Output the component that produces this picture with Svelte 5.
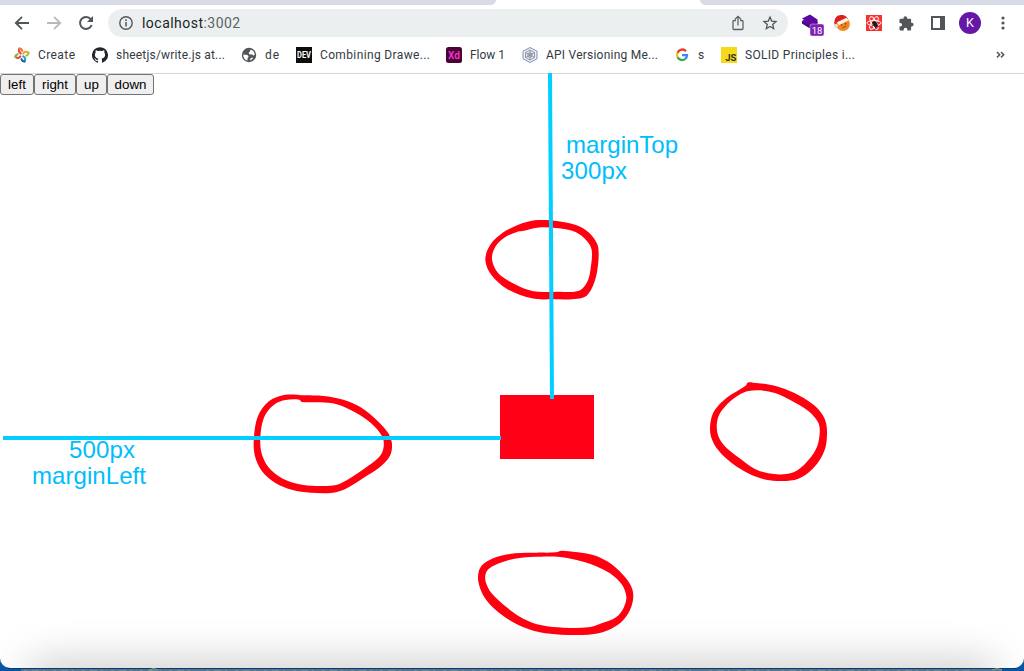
<script>
  const bookmarks = [
    { icon: 'create', label: 'Create', width: 78, text: 37 },
    { icon: 'github', label: 'sheetjs/write.js at...', width: 149, text: 109 },
    { icon: 'globe', label: 'de', width: 55, text: 14 },
    { icon: 'dev', label: 'Combining Drawe...', width: 150, text: 110 },
    { icon: 'xd', label: 'Flow 1', width: 76, text: 35 },
    { icon: 'hex', label: 'API Versioning Me...', width: 152, text: 112 },
    { icon: 'google', label: 's', width: 47, text: 6 },
    { icon: 'js', label: 'SOLID Principles i...', width: 150, text: 110 }
  ];
  const moves = [
    { label: 'left', width: 34 },
    { label: 'right', width: 42 },
    { label: 'up', width: 31 },
    { label: 'down', width: 47 }
  ];

  // Pen strokes: outer and inner edges, in thirds of a pixel from (x, y).
  const rings = [
    {
      x: 470, y: 200,
      outer: '143,75 100,97 62,133 46,177 62,222 110,266 185,295 250,298 313,297 350,287 372,250 382,210 386,165 382,133 358,99 318,75 240,61 194,61 170,66',
      inner: '143,95 162,92 202,83 258,84 315,95 350,122 365,150 362,205 352,245 327,272 265,275 190,274 135,253 85,220 66,178 76,140 105,112'
    },
    {
      x: 240, y: 380,
      outer: '132,45 194,46 250,48 310,59 362,82 412,122 445,160 456,192 450,227 420,261 370,294 316,327 279,338 213,338 155,329 105,308 66,274 44,225 42,169 54,108 85,65',
      inner: '178,59 137,60 105,72 76,104 63,150 63,212 85,261 130,297 190,315 240,318 285,316 320,301 387,256 420,228 431,200 427,170 395,131 345,97 290,73 240,67 186,66'
    },
    {
      x: 690, y: 370,
      outer: '167,47 173,38 189,38 239,44 285,57 341,84 385,118 408,158 409,220 395,260 365,299 325,326 278,333 228,329 180,313 125,279 85,241 63,200 61,160 73,122 110,83',
      inner: '176,63 148,74 112,102 85,140 82,188 103,227 151,266 195,297 235,310 280,313 320,302 358,267 381,230 389,190 385,158 355,123 302,91 255,69 212,61'
    },
    {
      x: 460, y: 540,
      outer: '288,37 305,32 325,34 370,39 409,48 455,73 498,115 517,148 519,180 505,220 476,253 430,276 385,284 303,284 240,277 175,255 115,217 75,175 56,130 56,95 70,72 110,51 165,40 230,38',
      inner: '293,50 240,50 184,53 140,62 95,80 78,98 77,125 95,160 140,202 190,236 245,256 310,263 385,262 425,250 468,232 491,203 499,170 485,133 450,100 405,77 350,60'
    }
  ];

  function curve(list) {
    const p = list.split(' ').map((pair) => pair.split(',').map(Number));
    const at = (i) => p[(i + p.length) % p.length];
    let d = `M${p[0]}`;
    for (let i = 0; i < p.length; i++) {
      const [a, b, c, e] = [at(i - 1), at(i), at(i + 1), at(i + 2)];
      // Handles are limited by the chord length so uneven spacing never overshoots.
      const len = (m, n) => Math.hypot(m[0] - n[0], m[1] - n[1]);
      const bc = len(b, c);
      const s = bc / (len(a, b) + bc) / 3;
      const t = bc / (len(c, e) + bc) / 3;
      d += `C${b[0] + (c[0] - a[0]) * s} ${b[1] + (c[1] - a[1]) * s} ${c[0] - (e[0] - b[0]) * t} ${c[1] - (e[1] - b[1]) * t} ${c[0]} ${c[1]}`;
    }
    return d + 'Z';
  }
</script>

<div class="desktop">
  <svg class="behind" width="1024" height="7" viewBox="0 0 1024 7">
    <path d="M0 0h1024v7H0z" fill="#0755a5" />
    <path d="M21 4.5h981V7H21z" fill="#52748f" />
    <path d="M8 4h1008v1H8z" fill="#073e71" />
    <path d="M24 6.5h174m8 0h198m10 0h130m10 0h145m10 0h62m10 0h190" stroke="#74898f" stroke-dasharray="3 5 7 4 2 8" />
    <path d="M149 6q5-3 9 0M992 6q5-3 10 0" fill="none" stroke="#82aa89" />
  </svg>

  <main class="window">
    <div class="tabs"><i class="tab-left"></i><i class="tab-right"></i></div>

    <header class="toolbar">
      <svg class="nav" width="100" height="28" viewBox="0 0 100 28" fill="none" stroke-width="2">
        <path d="M29 14H16.2M22 7.8 15.8 14l6.2 6.2" stroke="#51565b" stroke-width="1.8" />
        <path d="M47 14h12.8M54 7.8l6.2 6.2-6.2 6.2" stroke="#b7babc" stroke-width="1.8" />
        <path d="M90.8 10.2A6 6 0 1 0 91.7 16" stroke="#51565b" />
        <path d="M93 7v6h-6z" fill="#51565b" />
      </svg>
      <div class="address">
        <svg width="16" height="16" viewBox="0 0 16 16"><circle cx="8" cy="8" r="6.2" fill="none" stroke="#51565b" stroke-width="1.4" /><path d="M8 7v4.5M8 4.3v1.6" stroke="#51565b" stroke-width="1.5" /></svg>
        <span class="url">localhost<em>:3002</em></span>
        <svg class="share" width="16" height="18" viewBox="0 0 16 18" fill="none" stroke="#5c6165" stroke-width="1.3"><path d="M6 6.5H4a1 1 0 0 0-1 1v7a1 1 0 0 0 1 1h8a1 1 0 0 0 1-1v-7a1 1 0 0 0-1-1h-2M8 11.5V2.5M5 5.3l3-3 3 3" /></svg>
        <svg width="16" height="16" viewBox="0 0 16 16" fill="none" stroke="#51565b" stroke-width="1.3"><path d="m8 2.1 1.7 4 4.3.4-3.3 2.9 1 4.3L8 11.5l-3.7 2.2 1-4.3L2 6.5l4.3-.4z" /></svg>
      </div>
      <div class="extensions">
        <svg width="24" height="24" viewBox="0 0 24 24"><path d="m10 3.5 7.5 5v4l-7.5 4-8-4.5V10l2-1.2L2 7.5z" fill="#5e08a2" /><path d="m2 10.5 8 5 7.5-5v2l-7.5 5-8-5z" fill="#430779" /><rect x="10" y="13" width="14" height="12" rx="2" fill="#7e20b5" stroke="#fff" stroke-width=".4" /><text x="17" y="22.7" text-anchor="middle" font-size="9.5" fill="white">18</text></svg>
        <svg width="18" height="18" viewBox="0 0 18 18"><circle cx="10" cy="10" r="6.9" fill="#f28721" /><path d="M1.5 11C.6 4 4 1 8 1c4 0 7 2 7 5L5 8z" fill="#dc211d" /><path d="m4 8.3 9.5-4.5 2.3 2.5-10 5z" fill="#fff4e7" /><circle cx="3" cy="12" r="2" fill="#e3dddd" /><circle cx="8.5" cy="11" r=".8" fill="#7c361a" /><circle cx="12.5" cy="9.7" r=".8" fill="#7c361a" /><path d="M9.5 13.6q3 0 3.6-2" fill="none" stroke="#a34b15" /></svg>
        <svg width="16" height="16" viewBox="0 0 16 16"><path d="M0 0h16v16H0z" fill="#f53331" /><g fill="none" stroke="#fff" stroke-width=".9"><ellipse cx="8" cy="8" rx="7" ry="2.6" /><ellipse cx="8" cy="8" rx="7" ry="2.6" transform="rotate(60 8 8)" /><ellipse cx="8" cy="8" rx="7" ry="2.6" transform="rotate(120 8 8)" /></g><ellipse cx="9" cy="9.3" rx="2.2" ry="3.2" fill="#28171a" transform="rotate(-30 9 9)" /><path d="m6 7 7 5M6 11l6-4M8 6l2 8" stroke="#28171a" stroke-width=".8" /></svg>
        <svg width="16" height="16" viewBox="0 0 16 16"><path fill="#51565b" d="M2.5 3.8h3V3a1.8 1.8 0 0 1 3.6 0v.8h3a1 1 0 0 1 1 1v3h.7a1.8 1.8 0 0 1 0 3.6h-.7v3a1 1 0 0 1-1 1H9.3v-.9a1.8 1.8 0 0 0-3.6 0v.9H2.5a1 1 0 0 1-1-1v-2.8h.8a1.8 1.8 0 0 0 0-3.6h-.8V4.8a1 1 0 0 1 1-1z" /></svg>
        <svg width="14" height="14" viewBox="0 0 14 14"><path d="M1 1h12v12H1z" fill="#fff" stroke="#51565b" stroke-width="2" /><path d="M9 1h4v12H9z" fill="#51565b" /></svg>
        <div class="avatar">K</div>
        <svg width="4" height="14" viewBox="0 0 4 14" fill="#51565b"><circle cx="2" cy="2" r="1.6" /><circle cx="2" cy="7" r="1.6" /><circle cx="2" cy="12" r="1.6" /></svg>
      </div>
    </header>

    <nav class="bookmarks">
      {#each bookmarks as item}
        <div class="bookmark" style:width="{item.width}px">
          <svg width="16" height="16" viewBox="0 0 16 16">
            {#if item.icon === 'create'}
              <g fill="none" stroke-width="2.1" stroke-linecap="round"><path d="M6.8 6.5Q3.8 4.6 5.4 1.6" stroke="#ef4a3c" /><path d="M5.4 1.6Q7.5 1.5 8.3 3.8" stroke="#f07a35" /><path d="M9.3 6.6Q11 3.4 14.4 5.7" stroke="#f5a02c" /><path d="M14.4 5.7q.4 2-2.1 3" stroke="#9cc83d" /><path d="M9.3 9.4q3.1 1.7 1.2 5" stroke="#2b9ed0" /><path d="M10.5 14.4q-2.3.1-3-2.2" stroke="#1766ac" /><path d="M6.5 9.3Q4.6 12.3 1.5 10" stroke="#ed4148" /><path d="M1.5 10q-.2-2 2.1-2.8" stroke="#78bd43" /></g>
            {:else if item.icon === 'github'}
              <path fill="#20262b" d="M8 .2a8 8 0 0 0-2.5 15.6c.4.1.5-.2.5-.4v-1.6c-2.2.5-2.7-.9-2.7-.9-.4-1-.9-1.2-.9-1.2-.7-.5.1-.5.1-.5.8.1 1.2.8 1.2.8.7 1.2 1.9.9 2.3.7.1-.5.3-.9.5-1.1-1.8-.2-3.6-.9-3.6-4 0-.9.3-1.6.8-2.2-.1-.2-.4-1 .1-2.1 0 0 .7-.2 2.2.8a7.6 7.6 0 0 1 4 0c1.5-1 2.2-.8 2.2-.8.4 1.1.1 1.9.1 2.1.5.6.8 1.3.8 2.2 0 3.1-1.9 3.8-3.7 4 .3.3.6.8.6 1.5v2.3c0 .2.1.5.5.4A8 8 0 0 0 8 .2z" />
            {:else if item.icon === 'globe'}
              <circle cx="8" cy="8" r="7.2" fill="#51565b" /><path d="M2.3 7.6 6.5 8l1.2 1.6L6.5 11v2.6C3.5 12.9 2 10.5 2.3 7.6zM9.5 2.4c2.4.5 4.2 2.7 4.2 5.1l-.9 1.2-1.5-1.3H8.7L7.5 5.8 9 4.6z" fill="#fff" /><path d="m9 12 1.8-1.5 1.5.6L9.5 13.6z" fill="#fff" />
            {:else if item.icon === 'dev'}
              <path d="M0 0h16v16H0z" fill="#0d0d0d" /><text x="1" y="11.4" font-size="9" font-weight="700" fill="#fff" textLength="14" lengthAdjust="spacingAndGlyphs">DEV</text>
            {:else if item.icon === 'xd'}
              <rect width="16" height="16" rx="2.5" fill="#480433" /><text x="2" y="11.5" font-size="10" font-weight="600" fill="#ff32d0" textLength="12">Xd</text>
            {:else if item.icon === 'hex'}
              <path d="m8 .5 7 3.7v7.6l-7 3.7-7-3.7V4.2z" fill="#edf0f4" stroke="#8189c6" /><g fill="none" stroke="#77848d" stroke-width=".8"><path d="m8 3 4.5 2.5v5L8 13l-4.5-2.5v-5zm0 0v10M3.5 5.5l9 5m0-5-9 5" /><circle cx="8" cy="8" r="2.3" /></g>
            {:else if item.icon === 'google'}
              <g fill="none" stroke-width="2.3"><path d="M12 4.2A5 5 0 0 0 3.6 5.8" stroke="#ea3829" /><path d="M3.6 5.8a5 5 0 0 0 0 4.5" stroke="#fbbc05" /><path d="M3.6 10.3a5 5 0 0 0 7.7 1.6" stroke="#34a853" /><path d="M8 8.2h5q0 2.3-1.7 3.7" stroke="#4285f4" /></g>
            {:else}
              <path d="M0 0h16v16H0z" fill="#f4da19" /><text x="4.3" y="14.3" font-size="9.5" font-weight="700" fill="#303020" textLength="11">JS</text>
            {/if}
          </svg>
          <svg class="label" width={item.text + 2} height="18"><text x="0" y="13" textLength={item.text}>{item.label}</text></svg>
        </div>
      {/each}
      <svg class="more" width="9" height="9" viewBox="0 0 9 9" fill="none" stroke="#51565b" stroke-width="1.5"><path d="m1 2 2.7 2.7L1 7.4M5 2l2.7 2.7L5 7.4" /></svg>
    </nav>

    <section class="page">
      <div class="buttons">
        {#each moves as move}
          <button style:width="{move.width}px">{move.label}</button>
        {/each}
      </div>
      <svg class="canvas" width="1024" height="598" viewBox="0 73 1024 598">
        <path d="M500 395h94v64h-94z" fill="#ff0016" />
        <g fill="#ff0010" fill-rule="evenodd">
          {#each rings as ring}
            <path transform="translate({ring.x} {ring.y}) scale(.33333)" d={curve(ring.outer) + curve(ring.inner)} />
          {/each}
        </g>
        <g stroke="#00cfff" stroke-width="4" fill="none"><path d="M550 73 552 399" /><path d="M3 438h498" /></g>
        <g class="notes"><text x="566" y="153" textLength="112">marginTop</text><text x="561" y="179" textLength="66">300px</text><text x="69" y="458" textLength="66">500px</text><text x="32" y="484" textLength="114">marginLeft</text></g>
      </svg>
    </section>
  </main>
</div>

<style>
  :global(body) { margin: 0; overflow: hidden; }
  .desktop { position: relative; width: 1024px; height: 671px; overflow: hidden; background: #0755a5; font-family: Roboto, sans-serif; }
  svg { display: block; flex-shrink: 0; }
  .behind { position: absolute; left: 0; bottom: 0; }
  .window { position: relative; height: 668px; overflow: hidden; background: #fff; border-radius: 0 0 10px 10px; }
  .window::after { content: ''; position: absolute; left: 34px; right: 34px; bottom: -30px; height: 30px; box-shadow: 0 0 44px 4px rgba(0, 0, 0, .23); }
  .tabs { display: flex; justify-content: space-between; height: 5px; }
  .tabs i { background: #d6dbe5; }
  .tab-left { width: 496px; border-radius: 0 0 5px 0; }
  .tab-right { width: 324px; border-radius: 0 0 0 5px; }
  .toolbar { display: flex; align-items: center; height: 36px; }
  .nav { margin-right: 8px; }
  .address { box-sizing: border-box; display: flex; align-items: center; width: 680px; height: 28px; padding: 0 10px; border-radius: 14px; background: #ebeff0; }
  .url { flex: 1; margin-left: 8px; color: #202326; font-size: 14px; letter-spacing: .47px; }
  .url em { font-style: normal; color: #5d6265; }
  .share { margin-right: 16px; }
  .extensions { display: flex; align-items: center; padding-left: 12px; }
  .extensions > :nth-child(1) { margin-right: 8px; overflow: visible; }
  .extensions > :nth-child(2) { margin-right: 15px; margin-left: 1px; }
  .extensions > :nth-child(3) { margin-right: 16px; }
  .extensions > :nth-child(4) { margin-right: 17px; }
  .extensions > :nth-child(5) { margin-right: 14px; }
  .avatar { width: 22px; height: 22px; margin-right: 20px; border-radius: 50%; background: #6517a5; color: #fff; font-size: 12.5px; line-height: 22px; text-align: center; }
  .bookmarks { box-sizing: border-box; display: flex; align-items: center; height: 33px; padding: 0 19px 5px 14px; border-bottom: 1px solid #d6d6d6; }
  .bookmark { display: flex; align-items: center; gap: 8px; flex-shrink: 0; }
  .label { font-size: 12px; fill: #343a3f; }
  .more { margin-left: auto; }
  .page { position: relative; height: 594px; }
  .buttons { display: flex; }
  button { box-sizing: border-box; height: 21px; padding: 0; border: 1px solid #737373; border-radius: 3px; background: #efefef; color: #000; font: 13.333px/17px "Liberation Sans", Arial, sans-serif; }
  .canvas { position: absolute; top: -1px; left: 0; z-index: 1; pointer-events: none; }
  .notes { font: 24px "Liberation Sans", Arial, sans-serif; fill: #00bdfc; }
</style>
